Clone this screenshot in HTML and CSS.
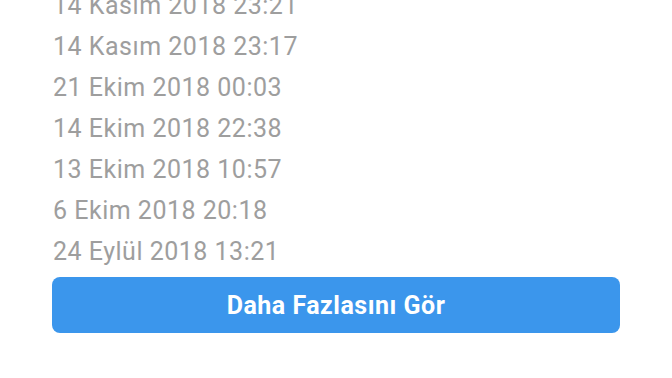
FILE: index.html
```html
<!DOCTYPE html>
<html lang="tr">
<head>
    <meta charset="UTF-8">
    <meta name="viewport" content="width=device-width, initial-scale=1.0">
    <title>Giriş Geçmişi</title>
    <link rel="stylesheet" href="styles.css">
</head>
<body>

    <div class="container">
        <ul class="date-list">
            <li>14 Kasım 2018 23:21</li>
            <li>14 Kasım 2018 23:17</li>
            <li>21 Ekim 2018 00:03</li>
            <li>14 Ekim 2018 22:38</li>
            <li>13 Ekim 2018 10:57</li>
            <li>6 Ekim 2018 20:18</li>
            <li>24 Eylül 2018 13:21</li>
        </ul>
        <button class="more-button">Daha Fazlasını Gör</button>
    </div>

</body>
</html>
```

FILE: styles.css
```css
body {
    font-family: Roboto, "Noto Sans", sans-serif;
    margin: 0;
    background-color: #fff;
    overflow: hidden;
}

.container {
    padding: 0 52px;
}

.date-list {
    list-style: none;
    margin: -15px 0 0 0;
    padding: 0 0 0 1px;
}

.date-list li {
    font-size: 25px;
    line-height: 41px;
    letter-spacing: 0.5px;
    color: #9e9e9e;
}

.more-button {
    display: block;
    width: 100%;
    height: 56px;
    margin-top: 5px;
    background-color: #3b96ec;
    color: #fff;
    border: none;
    border-radius: 8px;
    font-family: Roboto, "Noto Sans", sans-serif;
    font-size: 25px;
    font-weight: 700;
    letter-spacing: 0.5px;
    cursor: pointer;
}
```
